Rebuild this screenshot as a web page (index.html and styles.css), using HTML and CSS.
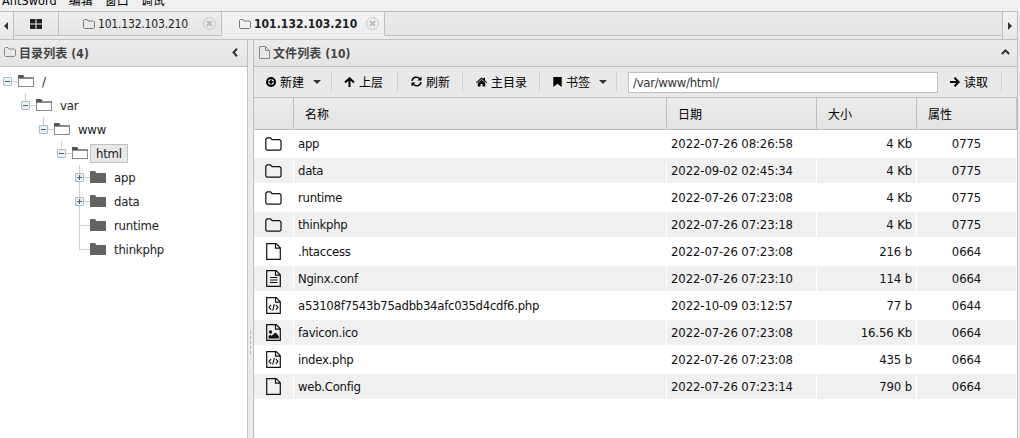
FILE: index.html
```html
<!DOCTYPE html>
<html lang="zh-CN">
<head>
    <meta charset="UTF-8">
    <title>AntSword</title>
    <link rel="stylesheet" href="styles.css">
</head>
<body>
    <!-- icons -->
    <svg class="sprite">
        <symbol id="i-folder-o" viewBox="0 0 12 10"><path d="M.5 8.500v-7l1-1h2.500l1 1.500h5.500l1 1v5.500l-1 1h-9z" fill="none" stroke="currentColor"/></symbol>
        <symbol id="i-file-o" viewBox="0 0 11 13"><path d="M.5.5h6l4 4v8H.5zM6.500.5v4h4" fill="none" stroke="currentColor"/></symbol>
        <symbol id="i-grid" viewBox="0 0 11 9"><path d="M0 0h5v4H0zM6 0h5v4H6zM0 5h5v4H0zM6 5h5v4H6z" fill="currentColor"/></symbol>
        <symbol id="i-close" viewBox="0 0 13 13"><circle cx="6.500" cy="6.500" r="6" fill="none" stroke="currentColor" stroke-width=".8"/><path d="M4 4l5 5M9 4l-5 5" stroke="currentColor" stroke-width="2"/></symbol>
        <symbol id="i-plus" viewBox="0 0 10 10"><circle cx="5" cy="5" r="4" fill="none" stroke="currentColor" stroke-width="2"/><path d="M5 2.500v5M2.500 5h5" stroke="currentColor" stroke-width="1.600"/></symbol>
        <symbol id="i-up" viewBox="0 0 11 10"><path d="M5.500 10V2M1 5.500l4.500-4.300L10 5.500" fill="none" stroke="currentColor" stroke-width="2"/></symbol>
        <symbol id="i-right" viewBox="0 0 10 10"><path d="M0 5h8M4.500.8L8.700 5 4.500 9.200" fill="none" stroke="currentColor" stroke-width="2"/></symbol>
        <symbol id="i-refresh" viewBox="0 0 11 11"><path d="M1 4.800A4.400 4.400 0 0 1 8.800 2.900M10 6.200A4.400 4.400 0 0 1 2.200 8.100" fill="none" stroke="currentColor" stroke-width="1.500"/><path d="M10.500.5v4h-4zM.5 10.500v-4h4z" fill="currentColor"/></symbol>
        <symbol id="i-home" viewBox="0 0 11 10"><path d="M0 5.200L5.500.4l2 1.700V.8H9v2.700l2 1.700-.7.800L5.500 1.900.7 6z" fill="currentColor"/><path d="M1.800 6l3.700-3.200L9.200 6v3.500H6.500V7h-2v2.500H1.800z" fill="currentColor"/></symbol>
        <symbol id="i-bookmark" viewBox="0 0 9 10"><path d="M.3 0h8.400v10L4.500 6.800.3 10z" fill="currentColor"/></symbol>
        <symbol id="i-dir" viewBox="0 0 17 14"><path d="M.8 12V2.300L2.200.8h3.400L7 2.600h7.600L16 4v8l-1.200 1.200H2z" fill="none" stroke="currentColor" stroke-width="1.200"/></symbol>
        <symbol id="i-file" viewBox="0 0 15 17"><path d="M.7.7h9.500l4.100 4.100v11.500H.7zM9.500.7v4.500h4.800" fill="none" stroke="currentColor" stroke-width="1.200"/></symbol>
        <symbol id="i-text" viewBox="0 0 15 17"><use href="#i-file"/><path d="M4 7.500h7.500M4 10h7.500M4 12.500h7.500" stroke="currentColor" stroke-width="1.200"/></symbol>
        <symbol id="i-code" viewBox="0 0 15 17"><use href="#i-file"/><path d="M5.200 7.800L3 10.300l2.200 2.500M9.800 7.800l2.200 2.500-2.200 2.500M8.300 6.800l-1.600 6.900" fill="none" stroke="currentColor" stroke-width="1.100"/></symbol>
        <symbol id="i-image" viewBox="0 0 15 17"><use href="#i-file"/><circle cx="4.500" cy="8" r="1.700" fill="currentColor"/><path d="M2.500 14.500v-2.300l1.700-1.500 1.500 1 3.300-3 1.800.8 2 3v2z" fill="currentColor"/></symbol>
        <symbol id="i-open" viewBox="0 0 16 12"><path d="M0 12V0h5l1.500 2H16v10z" fill="#8b8b8b"/><path d="M0 3V0h5l1.500 2H6L5 3z" fill="#555"/><path d="M1 4h14v7H1z" fill="#fff"/></symbol>
        <symbol id="i-shut" viewBox="0 0 16 12"><path d="M0 12V0h5l1.500 2H16v10z" fill="#636363"/></symbol>
    </svg>

    <div class="menu"><span>AntSword</span><span>编辑</span><span>窗口</span><span>调试</span></div>

    <div class="tabbar">
        <div class="arrow"><i class="tri-left"></i></div>
        <div class="tab home"><svg width="12" height="10"><use href="#i-grid"/></svg></div>
        <div class="tab">
            <svg class="fold" width="12" height="10"><use href="#i-folder-o"/></svg><span>101.132.103.210</span>
            <svg class="close" width="13" height="13"><use href="#i-close"/></svg>
        </div>
        <div class="tab active">
            <svg class="fold" width="12" height="10"><use href="#i-folder-o"/></svg><span>101.132.103.210</span>
            <svg class="close" width="13" height="13"><use href="#i-close"/></svg>
        </div>
        <div class="tab-fill"></div>
        <div class="arrow right"><i class="tri-right"></i></div>
    </div>

    <div class="layout">
        <div class="side">
            <div class="pane-head">
                <svg width="12" height="10"><use href="#i-folder-o"/></svg><b>目录列表 (4)</b>
                <svg class="fold-btn" width="6" height="9"><path d="M5 .8L1.500 4.500 5 8.200" fill="none" stroke="#333" stroke-width="2"/></svg>
            </div>
            <div class="tree">
                <div class="node l0"><i class="box"></i><i class="dash"></i><svg width="16" height="12"><use href="#i-open"/></svg><span>/</span></div>
                <div class="node l1 up"><i class="box"></i><i class="dash"></i><svg width="16" height="12"><use href="#i-open"/></svg><span>var</span></div>
                <div class="node l2 up"><i class="box"></i><i class="dash"></i><svg width="16" height="12"><use href="#i-open"/></svg><span>www</span></div>
                <div class="node l3 up"><i class="box"></i><i class="dash"></i><svg width="16" height="12"><use href="#i-open"/></svg><span class="selected">html</span></div>
                <div class="node l4 up down"><i class="box plus"></i><i class="dash"></i><svg width="16" height="12"><use href="#i-shut"/></svg><span>app</span></div>
                <div class="node l4 up down"><i class="box plus"></i><i class="dash"></i><svg width="16" height="12"><use href="#i-shut"/></svg><span>data</span></div>
                <div class="node l4 up down"><i class="dash long"></i><svg width="16" height="12"><use href="#i-shut"/></svg><span>runtime</span></div>
                <div class="node l4 up"><i class="dash long"></i><svg width="16" height="12"><use href="#i-shut"/></svg><span>thinkphp</span></div>
            </div>
        </div>

        <div class="splitter"><i></i></div>

        <div class="main">
            <div class="pane-head">
                <svg width="11" height="13"><use href="#i-file-o"/></svg><b>文件列表 (10)</b>
                <svg class="fold-btn" width="9" height="6"><path d="M.8 5L4.500 1.500 8.200 5" fill="none" stroke="#333" stroke-width="2"/></svg>
            </div>
            <div class="toolbar">
                <div class="tool new"><svg width="10" height="10"><use href="#i-plus"/></svg>新建<i class="caret"></i></div>
                <div class="tool up-btn"><svg width="11" height="10"><use href="#i-up"/></svg>上层</div>
                <div class="tool refresh"><svg width="11" height="11"><use href="#i-refresh"/></svg>刷新</div>
                <div class="tool root"><svg width="11" height="10"><use href="#i-home"/></svg>主目录</div>
                <div class="tool mark"><svg width="9" height="10"><use href="#i-bookmark"/></svg>书签<i class="caret"></i></div>
                <input class="path" type="text" value="/var/www/html/">
                <div class="tool read"><svg width="10" height="10"><use href="#i-right"/></svg>读取</div>
            </div>
            <div class="row head"><div></div><div>名称</div><div>日期</div><div>大小</div><div>属性</div></div>
            <div class="row"><div><svg width="17" height="14"><use href="#i-dir"/></svg></div><div>app</div><div>2022-07-26 08:26:58</div><div>4 Kb</div><div>0775</div></div>
            <div class="row"><div><svg width="17" height="14"><use href="#i-dir"/></svg></div><div>data</div><div>2022-09-02 02:45:34</div><div>4 Kb</div><div>0775</div></div>
            <div class="row"><div><svg width="17" height="14"><use href="#i-dir"/></svg></div><div>runtime</div><div>2022-07-26 07:23:08</div><div>4 Kb</div><div>0775</div></div>
            <div class="row"><div><svg width="17" height="14"><use href="#i-dir"/></svg></div><div>thinkphp</div><div>2022-07-26 07:23:18</div><div>4 Kb</div><div>0775</div></div>
            <div class="row"><div><svg width="15" height="17"><use href="#i-file"/></svg></div><div>.htaccess</div><div>2022-07-26 07:23:08</div><div>216 b</div><div>0664</div></div>
            <div class="row"><div><svg width="15" height="17"><use href="#i-text"/></svg></div><div>Nginx.conf</div><div>2022-07-26 07:23:10</div><div>114 b</div><div>0664</div></div>
            <div class="row"><div><svg width="15" height="17"><use href="#i-code"/></svg></div><div>a53108f7543b75adbb34afc035d4cdf6.php</div><div>2022-10-09 03:12:57</div><div>77 b</div><div>0644</div></div>
            <div class="row"><div><svg width="15" height="17"><use href="#i-image"/></svg></div><div>favicon.ico</div><div>2022-07-26 07:23:08</div><div>16.56 Kb</div><div>0664</div></div>
            <div class="row"><div><svg width="15" height="17"><use href="#i-code"/></svg></div><div>index.php</div><div>2022-07-26 07:23:08</div><div>435 b</div><div>0664</div></div>
            <div class="row"><div><svg width="15" height="17"><use href="#i-file"/></svg></div><div>web.Config</div><div>2022-07-26 07:23:14</div><div>790 b</div><div>0664</div></div>
        </div>
    </div>
</body>
</html>
```
FILE: styles.css
```css
* {
    box-sizing: border-box;
}

body {
    margin: 0;
    height: 438px;
    overflow: hidden;
    display: flex;
    flex-direction: column;
    background: #ebebeb;
    color: #222;
    font: 12px "DejaVu Sans Condensed", "Noto Sans CJK SC", sans-serif;
}

svg {
    flex: none;
}

.sprite {
    display: none;
}

/* top menu */
.menu {
    display: flex;
    align-items: flex-end;
    gap: 12px;
    flex: none;
    height: 11px;
    padding: 0 0 3px 2px;
    background: #f0f0f0;
    color: #000;
    line-height: 14px;
}

.menu span:first-child {
    font-size: 12.500px;
    letter-spacing: .1px;
}

/* tabs */
.tabbar {
    display: flex;
    flex: none;
    width: 1018px;
    height: 29px;
    border: 1px solid #c0c0c0;
    border-left: 0;
    background: #ebebeb;
}

.arrow {
    display: flex;
    align-items: center;
    width: 14px;
    padding-left: 4px;
    border-right: 1px solid #c0c0c0;
    background: linear-gradient(#f3f3f3, #e8e8e8);
}

.arrow.right {
    width: 15px;
    padding-left: 5px;
    border-right: 0;
    border-left: 1px solid #c0c0c0;
}

.tri-left, .tri-right {
    border: 4px solid transparent;
    border-left-width: 0;
    border-right-color: #333;
}

.tri-right {
    border-width: 4px 0 4px 4px;
    border-left-color: #333;
}

.tab {
    display: flex;
    align-items: center;
    width: 163px;
    height: 24px;
    padding-left: 24px;
    border-right: 1px solid #c0c0c0;
    border-bottom: 1px solid #c0c0c0;
    background: linear-gradient(#eee, #e5e5e5);
    letter-spacing: -.18px;
}

.tab.home {
    width: 45px;
    padding-left: 16px;
}

.tab span {
    width: 105px;
    margin-left: 3px;
}

.tab .fold {
    color: #777;
}

.tab .close {
    color: #bbb;
}

.tab.active {
    border-bottom-color: #f0f0f0;
    background: linear-gradient(#f3f3f3, #ededed);
    padding-left: 17px;
    font-weight: bold;
    letter-spacing: .05px;
}

.tab.active span {
    width: 112px;
    margin-left: 3px;
}

.tab-fill {
    flex: 1;
    height: 24px;
    border-bottom: 1px solid #c0c0c0;
    background: linear-gradient(#eaeaea, #e5e5e5);
}

/* panes */
.layout {
    display: flex;
    flex: 1;
    width: 1018px;
    min-height: 0;
    border-right: 1px solid #c0c0c0;
}

.side {
    width: 248px;
    border-right: 1px solid #c0c0c0;
    background: #fff;
}

.pane-head {
    display: flex;
    align-items: center;
    height: 27px;
    padding: 0 9px 2px 4px;
    border-bottom: 1px solid #c0c0c0;
    background: linear-gradient(#ececec, #e4e4e4);
    color: #444;
}

.pane-head > svg:first-child {
    color: #888;
}

.pane-head b {
    margin-left: 3px;
    letter-spacing: .1px;
}

.main .pane-head {
    padding: 0 7px 2px 5px;
}

.fold-btn {
    margin-left: auto;
}

.splitter {
    display: flex;
    justify-content: center;
    width: 5px;
}

.splitter i {
    height: 23px;
    margin-top: 291px;
    border-left: 1px dashed #bbb;
}

.main {
    flex: 1;
    border-left: 1px solid #c0c0c0;
    background: #fff;
}

/* directory tree */
.tree {
    padding-top: 2px;
    font-size: 13px;
    letter-spacing: -.2px;
}

.node {
    position: relative;
    display: flex;
    align-items: center;
    height: 24px;
    padding-left: 3px;
}

.l1 { padding-left: 21px; }
.l2 { padding-left: 39px; }
.l3 { padding-left: 57px; }
.l4 { padding-left: 75px; }

.box {
    z-index: 1;
    width: 9px;
    height: 9px;
    border: 1px solid #a9bcc6;
    border-radius: 1px;
    background: linear-gradient(#47616e, #47616e) center / 5px 1px no-repeat #edf3f6;
}

.box.plus {
    background: linear-gradient(#47616e, #47616e) center / 5px 1px no-repeat, linear-gradient(#47616e, #47616e) center / 1px 5px no-repeat #edf3f6;
}

.dash {
    width: 6px;
    border-top: 1px solid #d0d0d0;
}

.dash.long {
    width: 11px;
    margin-left: 4px;
}

.node svg {
    position: relative;
    background: #fff;
}

/* connector lines between nodes */
.up::before, .down::after {
    content: "";
    position: absolute;
    top: 0;
    height: 12px;
    margin-left: 4px;
    border-left: 1px solid #d0d0d0;
}

.down::after {
    top: 12px;
    left: 75px;
}

.node span {
    margin-left: 2px;
    padding: 0 5px;
    border: 1px solid transparent;
    line-height: 17px;
}

.node .selected {
    border-color: #c0c0c0;
    background: #e8e8e8;
}

/* toolbar */
.toolbar {
    display: flex;
    align-items: center;
    height: 31px;
    border-bottom: 1px solid #c0c0c0;
    background: #e9e9e9;
    color: #000;
}

.tool {
    display: flex;
    align-items: center;
    height: 20px;
    padding: 0 0 1px 12px;
    border-right: 1px solid #c5d4dc;
}

.tool svg {
    margin-right: 4px;
}

.new { width: 78px; }
.up-btn { width: 66px; }
.refresh { width: 65px; }
.root { width: 77px; }
.mark { width: 77px; }
.read { width: 64px; }

.refresh, .root, .mark {
    padding-left: 13px;
}

.caret {
    margin-left: 9px;
    border: 4px solid transparent;
    border-top-color: #333;
    border-bottom: 0;
}

.path {
    width: 310px;
    height: 21px;
    margin-left: 11px;
    padding: 0 4px;
    border: 1px solid #c0c0c0;
    background: #fff;
    color: #333;
    font: inherit;
    font-size: 13px;
    letter-spacing: -.3px;
}

/* file grid */
.row {
    display: grid;
    grid-template-columns: 39px 372px 149px 99px 99px;
    column-gap: 1px;
    height: 27px;
    padding: 1px 0;
    color: #111;
    font-size: 13px;
    line-height: 25px;
    letter-spacing: -.12px;
}

.row > div {
    padding: 0 4px;
    white-space: nowrap;
}

.row > div:first-child {
    display: flex;
    align-items: center;
    justify-content: center;
    padding: 0;
}

.row > div:nth-child(2) {
    letter-spacing: -.28px;
}

.row:nth-child(odd) > div {
    background: #f0f0f0;
}

.row > div:nth-child(4) {
    text-align: right;
}

.row > div:nth-child(5) {
    text-align: center;
}

.row.head {
    grid-template-columns: 40px 373px 150px 100px 100px;
    column-gap: 0;
    height: 32px;
    padding: 0;
    border-bottom: 1px solid #c0c0c0;
    background: #e9e9e9;
    color: #000;
    font-size: 12px;
    line-height: 34px;
    letter-spacing: 0;
}

.row.head > div {
    height: 31px;
    padding-left: 11px;
    border-right: 1px solid #c0c0c0;
    background: linear-gradient(#ececec, #e4e4e4);
    text-align: left;
    letter-spacing: 0;
}
```
